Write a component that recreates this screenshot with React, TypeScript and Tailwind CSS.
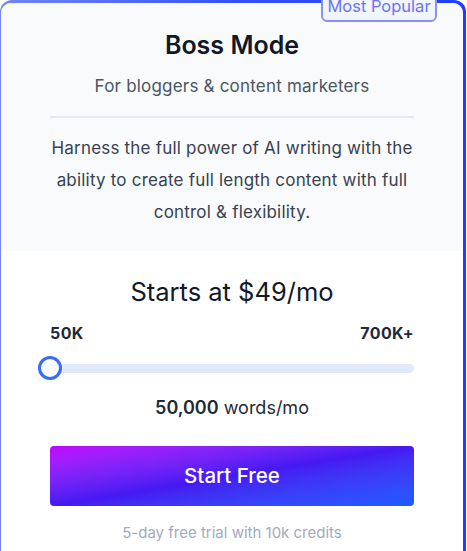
import React from "react";

export default function App() {
  return (
    <div className="w-[467px] h-[551px] overflow-hidden bg-white" style={{ fontFamily: "Inter, 'Noto Sans', sans-serif" }}>
      <div className="relative h-full w-[466px] bg-gradient-to-r from-[#7583f2] via-[#3450fb] to-[#1f3dff] pt-[3px] pl-[1px] pr-[3px] rounded-t-[12px]">
        <div className="h-full bg-white rounded-t-[10px] overflow-hidden">
          <div className="bg-[#f8fafc] px-[49px] pt-[26px] pb-[23px] text-center">
            <h2 className="text-[25px] leading-[32px] font-semibold text-[#111827]">Boss Mode</h2>
            <p className="mt-[13px] text-[17px] leading-[24px] tracking-[0.2px] text-[#4b5563]">For bloggers &amp; content marketers</p>
            <div className="mt-[18px] h-[2px] bg-[#e5e9f0]" />
            <p className="-mx-[5px] mt-[14px] text-[17px] leading-[32px] tracking-[0.2px] text-[#374151]">
              Harness the full power of AI writing with the ability to create full length content with full control &amp; flexibility.
            </p>
          </div>

          <div className="px-[49px] pt-[25px] text-center">
            <div className="text-[25.5px] leading-[32px] text-[#111827]">Starts at $49/mo</div>
            <div className="mt-[15px] flex justify-between text-[16px] leading-[20px] font-bold tracking-[0.4px] text-[#1f2937]">
              <span>50K</span>
              <span>700K+</span>
            </div>
            <div className="mt-[13px] relative h-[24px] flex items-center">
              <div className="w-full h-[9px] rounded-full bg-[#e0e9fa]" />
              <div className="absolute -left-[12px] top-0 w-[24px] h-[24px] rounded-full bg-white border-[3px] border-[#3a6bf5]" />
            </div>
            <div className="mt-[16px] text-[18px] leading-[24px] text-[#1f2937]">
              <span className="font-semibold">50,000</span> words/mo
            </div>
            <button className="mt-[26px] w-full h-[60px] rounded-[4px] bg-gradient-to-br from-[#c100ff] via-[#4519f2] to-[#1a5cff] text-white text-[20.5px] font-medium">
              Start Free
            </button>
            <div className="mt-[17px] text-[15px] leading-[20px] text-[#a0abbd]">5-day free trial with 10k credits</div>
          </div>
        </div>

        <div className="absolute right-[29px] -top-[6px] w-[116px] h-[28px] bg-[#f1f5fd] border-2 border-[#8a90f4] rounded-b-[6px] flex items-start justify-center text-[16.5px] leading-[20px] text-[#6f72ee]">
          Most Popular
        </div>
      </div>
    </div>
  );
}
